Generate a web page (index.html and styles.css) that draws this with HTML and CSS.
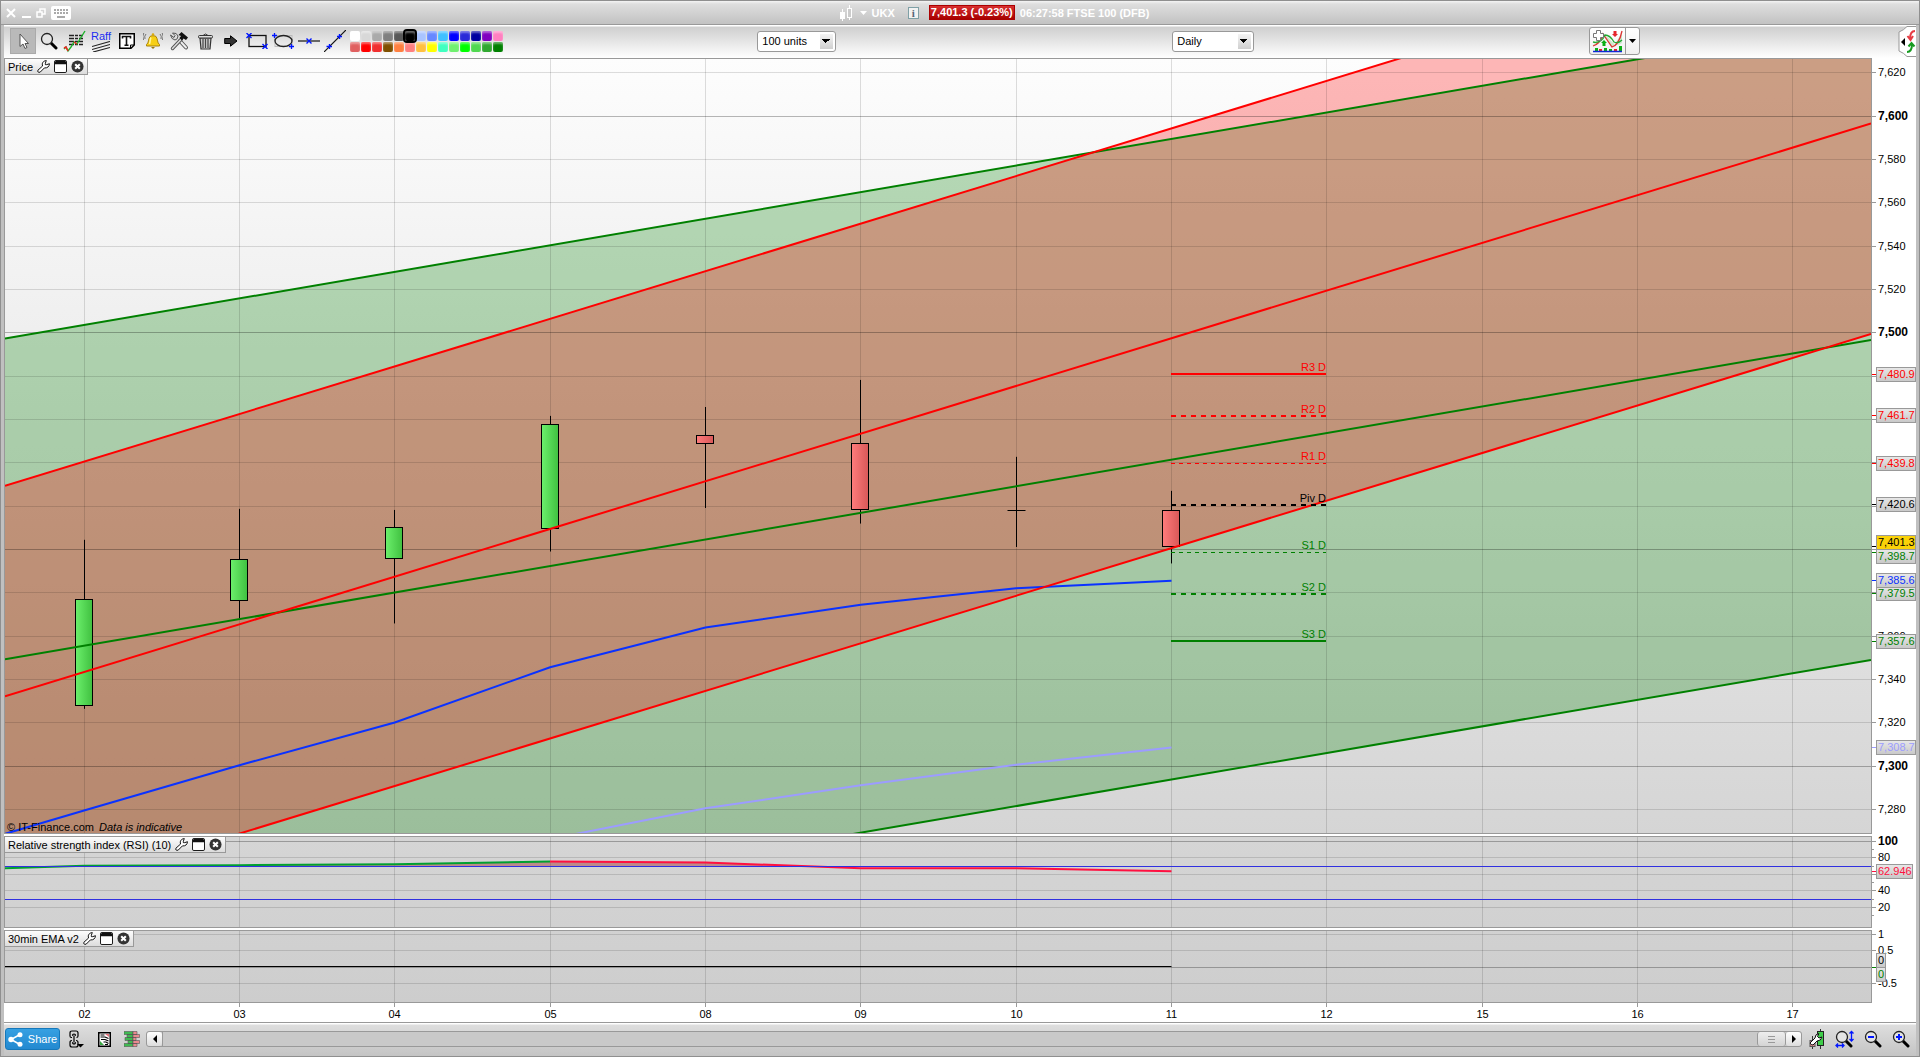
FILE: index.html
```html
<!DOCTYPE html>
<html lang="en">
<head>
    <meta charset="UTF-8">
    <meta name="viewport" content="width=device-width, initial-scale=1.0">
    <title>UKX - FTSE 100 (DFB)</title>
    <link rel="stylesheet" href="styles.css">
</head>
<body>
    <!-- shared icons -->
    <svg class="defs" width="0" height="0" aria-hidden="true">
        <symbol id="i-wrench" viewBox="0 0 14 14">
            <path d="M1 11 6 6.500C5 3.500 6.500 1 10 .600L9 3.500V5H10.500L13.400 4C13.400 7 11 9 8 8.500L3.500 13C1.500 14 .200 12.500 1 11Z" fill="#fff" stroke="#000" stroke-linejoin="round"/>
        </symbol>
        <symbol id="i-window" viewBox="0 0 14 14">
            <rect x="0.500" y="0.500" width="13" height="13" rx="1.500" fill="#fff" stroke="#000"/>
            <path d="M1 4.500V2L2 1H12L13 2V4.500Z" fill="#111"/>
        </symbol>
        <symbol id="i-close" viewBox="0 0 14 14">
            <circle cx="7" cy="7" r="6.500" fill="#333"/>
            <path d="M4.500 4.500 9.500 9.500M9.500 4.500 4.500 9.500" stroke="#fff" stroke-width="2.200"/>
        </symbol>
        <symbol id="i-lens" viewBox="0 0 18 18">
            <path d="M11 11 16 16" stroke="#000" stroke-width="3" stroke-linecap="round"/>
            <circle cx="7" cy="7" r="5.500" fill="#e4e4e4" stroke="#222" stroke-width="1.300"/>
        </symbol>
    </svg>

    <div class="window">
        <header class="titlebar">
            <div class="window-buttons">
                <button aria-label="Close"><svg width="10" height="10"><path d="M1 1 9 9M9 1 1 9" stroke="#fff" stroke-width="2"/></svg></button>
                <button aria-label="Minimize"><svg width="10" height="10"><path d="M1 9H10" stroke="#fff" stroke-width="2"/></svg></button>
                <button aria-label="Restore"><svg width="10" height="10"><path d="M4 4V1H9V6H6M1 4H6V9H1Z" fill="none" stroke="#fff" stroke-width="1.500"/></svg></button>
                <button aria-label="Keyboard"><svg width="20" height="14"><rect width="20" height="14" rx="2" fill="#fff"/><path d="M3 4H17M3 7H17" stroke="#aaa" stroke-width="2" stroke-dasharray="2 1"/><path d="M6 11H14" stroke="#aaa" stroke-width="2"/></svg></button>
            </div>
            <div class="instrument">
                <svg width="16" height="16"><path d="M3.500 4V16M10.500 0V15" stroke="#fff"/><rect x="1" y="7" width="5" height="7" fill="#fff"/><rect x="8.500" y="3.500" width="4" height="9" fill="#ccc" stroke="#fff"/></svg>
                <svg class="caret" width="7" height="4"><path d="M0 0H7L3.500 4Z" fill="#fff"/></svg>
                <b class="symbol">UKX</b>
                <button class="info" aria-label="Information">i</button>
                <b class="quote">7,401.3 (-0.23%)</b>
                <b>06:27:58 FTSE 100 (DFB)</b>
            </div>
        </header>

        <div class="toolbar">
            <div class="tools">
                <button class="tool active" aria-label="Pointer"><svg width="24" height="24"><path d="M9 5V17.500L12 15 14 19.500 16 18.500 14 14.500H17.500Z" fill="#fff" stroke="#555"/></svg></button>
                <button class="tool" aria-label="Zoom"><svg width="18" height="18"><use href="#i-lens"/></svg></button>
                <button class="tool" aria-label="Indicators"><svg width="24" height="24"><path d="M6 6.500H20M6 9.500H20M6 12.500H20M6 15.500H20" stroke="#222" stroke-width="1.500" stroke-dasharray="5 1 3 1"/><path d="M1 20 3 18 5 22 8 18 11 13 14 15 17 10 22 2" fill="none" stroke="#1db32b" stroke-width="1.400"/><path d="M1 19 3 18 5 22M11 13 14 15" fill="none" stroke="#e22" stroke-width="1.500"/></svg></button>
                <button class="tool raff" aria-label="Raff regression"><span>Raff</span><svg width="18" height="11"><path d="M0 5.500 18 0.500M0 8.500 18 3.500M1 11 18 6.500" stroke="#222" stroke-width="1.200"/></svg></button>
                <button class="tool" aria-label="Text"><svg width="16" height="16"><path d="M.750.750H15.250V12L12 15.250H.750Z" fill="#fff" stroke="#000" stroke-width="1.500"/><path d="M11.500 15V12H15" fill="none" stroke="#000"/><path d="M3.500 5.500V3.500H11.500V5.500M7.500 3.500V12M5.500 12.200H9.500" fill="none" stroke="#111" stroke-width="1.600"/></svg></button>
                <button class="tool" aria-label="Alert"><svg width="20" height="18"><path d="M3.500 12.500C6 11 5 7 7 4.500 8 3.500 12 3.500 13 4.500 15 7 14 11 16.500 12.500V14H3.500Z" fill="#f7cf16" stroke="#a9820b"/><path d="M8 5.500C7 7 7.500 9 6.500 12" stroke="#fff6a0" stroke-width="1.500" fill="none"/><circle cx="10" cy="2.500" r="1.300" fill="#d9a90e"/><path d="M8 15H12L10 17Z" fill="#9a760b"/><path d="M3 2Q1 4 2 7M.800 1Q-1 4 .500 8M17 2Q19 4 18 7M19.200 1Q21 4 19.500 8" stroke="#555" fill="none" stroke-width=".800"/></svg></button>
                <button class="tool" aria-label="Settings"><svg width="20" height="19"><path d="M11 9 17 15.500" stroke="#555" stroke-width="4" stroke-linecap="round"/><path d="M11 9 17 15.500" stroke="#eee" stroke-width="2" stroke-linecap="round"/><path d="M3.500 16.500 12 7.500" stroke="#555" stroke-width="3.400" stroke-linecap="round"/><path d="M3.500 16.500 12 7.500" stroke="#ddd" stroke-width="1.500" stroke-linecap="round"/><path d="M1.500 3 5 5.500 6 3.500 3.500 1Q8 .500 9 4 9 7.500 6 8 2.500 7.500 1.500 3Z" fill="#ddd" stroke="#555"/><path d="M9.500 3 12.500 0 19 5.500 17 8 14.500 6.500 13 8.500 10.500 6 12 4Z" fill="#111"/></svg></button>
                <button class="tool" aria-label="Delete"><svg width="15" height="17"><path d="M2 5 3 16H12L13 5Z" fill="#ccc" stroke="#333" stroke-width="1.200"/><path d="M5 6V15M7.500 6V15M10 6V15" stroke="#444" stroke-width="1.200"/><rect x=".500" y="2.500" width="14" height="2.500" rx="1" fill="#ddd" stroke="#333"/><path d="M5 2.500Q7.500-.500 10 2.500" fill="none" stroke="#333"/></svg></button>
                <button class="tool" aria-label="Arrow"><svg width="14" height="12"><path d="M.700 3.500H6.500V.800L13 6 6.500 11.200V8.500H.700Z" fill="#333" stroke="#000"/></svg></button>
                <button class="tool" aria-label="Rectangle"><svg width="22" height="16"><rect x="3" y="2.500" width="17" height="11" fill="none" stroke="#111" stroke-width="1.300"/><path d="M.500 0 5.500 5M5.500 0 .500 5M16.500 11 21.500 16M21.500 11 16.500 16" stroke="#0016ff" stroke-width="1.400"/></svg></button>
                <button class="tool" aria-label="Ellipse"><svg width="22" height="16"><rect x="3" y="2.500" width="17" height="11" fill="none" stroke="#bbb"/><ellipse cx="11.500" cy="8" rx="8.500" ry="5.500" fill="none" stroke="#222" stroke-width="1.300"/><path d="M0 2.500H5M2.500 0V5M17 13.500H22M19.500 11V16" stroke="#0016ff" stroke-width="1.300"/></svg></button>
                <button class="tool" aria-label="Horizontal line"><svg width="22" height="8"><path d="M0 4H22" stroke="#111" stroke-width="1.200"/><path d="M8.500 1.500 13.500 6.500M13.500 1.500 8.500 6.500" stroke="#0016ff" stroke-width="1.400"/></svg></button>
                <button class="tool" aria-label="Line"><svg width="22" height="22"><path d="M0 22 22 0" stroke="#111" stroke-width="1.200"/><path d="M2.500 16.500H8M5.500 14V19M13 6.500H18M15.500 4V9" stroke="#0016ff" stroke-width="1.400"/></svg></button>
                <div class="palette" id="palette"></div>
            </div>
            <div class="slot"><select class="units" aria-label="Units"><option>100 units</option></select></div>
            <div class="slot"><select class="period" aria-label="Period"><option>Daily</option></select></div>
            <div class="slot last">
                <div class="split">
                    <button aria-label="Add indicator"><svg width="31" height="23"><path d="M1 15 11 4 20 18 30 3V13Q24 19 17 8L12 5Q7 16 1 15Z" fill="#cde8cd"/><path d="M1 16Q8 14 11 4L20 17Q27 15 30 1" fill="none" stroke="#d33" stroke-width="1.300"/><path d="M1 12Q9 14 13 5 18 5 22 12 26 14 30 10" fill="none" stroke="#2a3" stroke-width="1.300"/><path d="M4.500.500H8.500V3.500H11.500V7.500H8.500V10.500H4.500V7.500H1.500V3.500H4.500Z" fill="#fff" stroke="#777"/><path d="M12 10 15 13H13.500V16H10.500V13H9ZM3 18H6V21H3ZM12 18H15V21H12ZM17 19H20V21H17ZM27 16H30V21H27Z" fill="#0aaf14"/><path d="M23 7 26 4H24.500V1H21.500V4H20ZM7 19H10V21H7ZM22 19H25V21H22Z" fill="#e5242c"/><path d="M1 21.500H30" stroke="#1028d8" stroke-width="1.500"/></svg></button>
                    <button class="drop" aria-label="Indicator menu"><svg width="7" height="4"><path d="M0 0H7L3.500 4Z"/></svg></button>
                </div>
                <button class="side-tab" aria-label="Open trading panel"><svg width="18" height="31"><path d="M18 .500H9Q6 4 1 6V25Q6 27 9 30.500H18" fill="#fff" stroke="#999"/><path d="M3 16 7 12V20Z"/><path d="M17 5Q12 5 12 13M9.500 10 12.500 14 15 10" fill="none" stroke="#e63c44" stroke-width="2"/><path d="M9 26Q14 26 14 18M10.500 20.500 13.500 17 16.500 20.500" fill="none" stroke="#169a20" stroke-width="2"/></svg></button>
            </div>
        </div>

        <main class="charts">
            <section class="panel price">
                <svg class="plot" id="price" role="img" aria-label="Price chart"></svg>
                <div class="panel-head">
                    <span>Price</span>
                    <button aria-label="Price settings"><svg><use href="#i-wrench"/></svg></button>
                    <button aria-label="Detach price"><svg><use href="#i-window"/></svg></button>
                    <button aria-label="Close price"><svg><use href="#i-close"/></svg></button>
                </div>
                <p class="credit">© IT-Finance.com <i>Data is indicative</i></p>
            </section>
            <section class="panel rsi">
                <svg class="plot" id="rsi" role="img" aria-label="RSI chart"></svg>
                <div class="panel-head">
                    <span>Relative strength index (RSI) (10)</span>
                    <button aria-label="RSI settings"><svg><use href="#i-wrench"/></svg></button>
                    <button aria-label="Detach RSI"><svg><use href="#i-window"/></svg></button>
                    <button aria-label="Close RSI"><svg><use href="#i-close"/></svg></button>
                </div>
            </section>
            <section class="panel ema">
                <svg class="plot" id="ema" role="img" aria-label="EMA chart"></svg>
                <div class="panel-head">
                    <span>30min EMA v2</span>
                    <button aria-label="EMA settings"><svg><use href="#i-wrench"/></svg></button>
                    <button aria-label="Detach EMA"><svg><use href="#i-window"/></svg></button>
                    <button aria-label="Close EMA"><svg><use href="#i-close"/></svg></button>
                </div>
            </section>
            <div class="dates"><svg class="plot" id="dates"></svg></div>
        </main>

        <footer class="footer">
            <button class="share"><svg width="15" height="15"><path d="M12 2.500 3 7.500 12 12.500" fill="none" stroke="#fff" stroke-width="1.500"/><circle cx="12" cy="2.700" r="2.500" fill="#fff"/><circle cx="3" cy="7.500" r="2.700" fill="#fff"/><circle cx="12" cy="12.300" r="2.500" fill="#fff"/></svg>Share</button>
            <button class="icon" aria-label="Link"><svg width="15" height="18"><path d="M3 7.500H2.500Q1 7.500 1 6V3Q1 1 3 1H7Q9 1 9 3V6Q9 7.500 7.500 7.500M3.800 6V4.500Q5 3.500 6.200 4.500V6M5 6V12M3 10.500Q1 10.500 1 12.500V15Q1 17 3 17H7Q9 17 9 15V12.500Q9 10.500 7 10.500M3.800 12V13.500Q5 14.500 6.200 13.500V12" fill="none" stroke="#000" stroke-width="1.200"/><path d="M8 14H15L11.500 17.500Z"/></svg></button>
            <button class="icon" aria-label="Order list"><svg width="13" height="15"><rect x=".750" y=".750" width="11.500" height="13.500" fill="#fff" stroke="#000" stroke-width="1.500"/><path d="M7 2H11V5Z" fill="#e5707a"/><path d="M2 9 6 13H2Z" fill="#3aa945"/><path d="M2.500 3H6.500M2.500 5H7L10.500 6.500M3 7.500H7L10.500 9M5.500 10H8L10.500 11.500M7 12.500H10" fill="none" stroke="#000" stroke-width="1.200"/></svg></button>
            <button class="icon" aria-label="Order book"><svg width="16" height="16"><path d="M0 .500H9V3.500H0ZM3 3.500H9V6.500H3ZM1 6.500H9V9.500H1ZM4 9.500H9V12.500H4ZM0 12.500H9V15.500H0Z" fill="#3fb951" stroke="#555" stroke-width=".600"/><path d="M9 .500H13V3.500H9ZM9 3.500H15.500V6.500H9ZM9 6.500H12V9.500H9ZM9 9.500H15.500V12.500H9ZM9 12.500H13V15.500H9Z" fill="#e98a8f" stroke="#555" stroke-width=".600"/></svg></button>
            <div class="scrollbar">
                <button aria-label="Scroll left"><svg width="4" height="8"><path d="M4 0V8L0 4Z"/></svg></button>
                <div class="track"><div class="thumb"><svg width="7" height="7"><path d="M0 .500H7M0 3.500H7M0 6.500H7" stroke="#999"/></svg></div></div>
                <button aria-label="Scroll right"><svg width="4" height="8"><path d="M0 0V8L4 4Z"/></svg></button>
            </div>
            <button class="icon" aria-label="Chart settings"><svg width="16" height="20"><path d="M11.500 0V20M3.500 7V20" stroke="#333"/><rect x="8.500" y="2.500" width="6" height="14" fill="#3fce4a" stroke="#222"/><rect x="1" y="11.500" width="5" height="6" fill="#e88b90" stroke="#555"/><path d="M1 14 6 9Q6 5 10 4.500L8.500 7.500 10 9 13 8Q12 12 8 12L4 16Q2 16 1 14Z" fill="#fff" stroke="#111"/></svg></button>
            <button class="icon" aria-label="Fit chart"><svg width="20" height="18"><use href="#i-lens" width="18" height="18"/><path d="M16.500 2V10M14.500 3.500 16.500 1.500 18.500 3.500M14.500 9 16.500 11 18.500 9M2 15.500H8M3 13.500 1 15.500 3 17.500M7 13.500 9 15.500 7 17.500" fill="none" stroke="#0016ff" stroke-width="1.300"/></svg></button>
            <button class="icon" aria-label="Zoom out"><svg width="18" height="18"><use href="#i-lens"/><path d="M4 7H10" stroke="#0016ff" stroke-width="2"/></svg></button>
            <button class="icon" aria-label="Zoom in"><svg width="18" height="18"><use href="#i-lens"/><path d="M4 7H10M7 4V10" stroke="#0016ff" stroke-width="2"/></svg></button>
        </footer>
    </div>
    <script src="script.js"></script>
</body>
</html>
```
FILE: styles.css
```css
* {
    box-sizing: border-box;
}
body {
    margin: 0;
    background: #c8c8c8;
    color: #000;
    font-family: "Liberation Sans", Arial, sans-serif;
    font-size: 11px;
}
button {
    margin: 0;
    padding: 0;
    border: 0;
    background: none;
    color: inherit;
    font: inherit;
    display: flex;
    align-items: center;
    justify-content: center;
}
svg {
    display: block;
    flex: none;
}
.defs {
    position: absolute;
}
.window {
    height: 100vh;
    min-height: 480px;
    display: flex;
    flex-direction: column;
    border: 1px solid #8f8f8f;
    background: #c0c0c0;
}

/* title bar */
.titlebar {
    height: 24px;
    flex: none;
    display: flex;
    align-items: center;
    padding-left: 5px;
    border-bottom: 1px solid #999;
    background: linear-gradient(#f4f4f4, #dedede 3px, #c2c2c2);
    color: #fff;
}
.window-buttons {
    display: flex;
    align-items: center;
    gap: 5px;
}
.instrument {
    flex: 1;
    display: flex;
    align-items: center;
    justify-content: center;
    gap: 5px;
    padding-right: 2px;
}
.symbol {
    margin-right: 8px;
}
.info {
    width: 11px;
    height: 12px;
    margin-right: 5px;
    border: 1px solid #7fa0a6;
    background: #f2f2f2;
    color: #567;
    font-family: "Liberation Serif", serif;
    font-weight: bold;
}
.quote {
    height: 15px;
    line-height: 13px;
    padding: 0 1px;
    border: 1px solid #a00;
    background: linear-gradient(#d83030, #a80000);
}

/* toolbar */
.toolbar {
    height: 33px;
    flex: none;
    margin: 0 3px;
    padding-bottom: 1px;
    display: grid;
    grid-template-columns: 39.4% 21.7% 21.8% 1fr;
    align-items: center;
    background: linear-gradient(#fff 1px, #cfcfcf 2px, #fff);
}
.tools {
    display: flex;
    align-items: center;
    padding-left: 6px;
}
.tool {
    width: 26px;
    height: 26px;
}
.tool.active {
    background: #b9b9b9;
    border: 1px solid #aaa;
}
.raff {
    flex-direction: column;
    color: #1a2cf0;
    line-height: 10px;
}
.palette {
    display: grid;
    grid-template-columns: repeat(14, 10px);
    gap: 1px;
    margin-left: 2px;
}
.swatch {
    width: 10px;
    height: 10px;
    border-radius: 2px;
    box-shadow: inset 0 2px 2px rgba(255, 255, 255, .4);
}
.swatch.selected {
    z-index: 1;
    outline: 2px solid #000;
}
.slot {
    display: flex;
    align-items: center;
}
.slot.last {
    justify-content: space-between;
}
select {
    height: 21px;
    padding: 0 4px;
    border: 1px solid #999;
    border-radius: 3px;
    appearance: none;
    color: #000;
    font: inherit;
    background:
        linear-gradient(to bottom right, #000 50%, transparent 50%) no-repeat right 5px center / 4px 4px,
        linear-gradient(to bottom left, #000 50%, transparent 50%) no-repeat right 9px center / 4px 4px,
        linear-gradient(#f4f4f4, #cfcfcf) no-repeat right 2px center / 13px 15px,
        #fff;
}
.units {
    width: 79px;
}
.period {
    width: 82px;
}
.split {
    display: flex;
    height: 28px;
    border: 1px solid #999;
    border-radius: 3px;
    background: linear-gradient(#fff, #f0f0f0);
}
.split button {
    padding: 0 2px;
}
.split .drop {
    width: 14px;
    border-left: 1px solid #999;
}

/* chart panels */
.charts {
    flex: 1;
    min-height: 0;
    margin: 0 3px;
    display: flex;
    flex-direction: column;
    background: #fff;
}
.panel {
    position: relative;
    overflow: hidden;
    flex: none;
    margin-bottom: 2px;
}
.price {
    flex: 1;
    min-height: 0;
}
.rsi {
    height: 92px;
}
.ema {
    height: 73px;
    margin-bottom: 0;
}
.dates {
    height: 19px;
    flex: none;
}
.plot {
    width: 100%;
    height: 100%;
}
.panel-head {
    position: absolute;
    left: 1px;
    top: 1px;
    height: 16px;
    display: flex;
    align-items: center;
    gap: 4px;
    padding: 0 3px;
    border: solid #999;
    border-width: 0 1px 1px 0;
    background: linear-gradient(#fdfdfd, #dcdcdc);
}
.panel-head svg {
    width: 13px;
    height: 13px;
}
.credit {
    position: absolute;
    left: 3px;
    bottom: 1px;
    margin: 0;
    line-height: 12px;
}
.credit i {
    margin-left: 2px;
}

/* plot parts */
.bold {
    font-size: 12px;
    font-weight: bold;
}
.grid {
    stroke: #000;
    stroke-opacity: .13;
}
.grid.major {
    stroke-opacity: .28;
}
.tick {
    stroke: #999;
}
.frame {
    fill: none;
    stroke: #999;
}
.line {
    fill: none;
    stroke-width: 2;
}
.tag {
    fill: url(#tag-gray);
    stroke: #999;
}
.tag.last {
    fill: #fbd208;
}

/* footer */
.footer {
    height: 34px;
    flex: none;
    display: flex;
    align-items: center;
    margin: 0 3px;
    padding: 0 1px 1px;
    border-top: 1px solid #999;
    background: linear-gradient(#fff 1px, #dedede 2px, #c4c4c4);
}
.share {
    width: 55px;
    height: 22px;
    gap: 5px;
    margin-right: 2px;
    border: 1px solid #1678ba;
    border-radius: 3px;
    background: linear-gradient(#36a0e2, #2389d0);
    color: #fff;
}
.icon {
    width: 28px;
    height: 24px;
}
.scrollbar {
    flex: 1;
    height: 16px;
    display: flex;
    margin-right: 1px;
    border: 1px solid #999;
    border-radius: 3px;
    background: #c9c9c9;
}
.scrollbar button {
    width: 15px;
    border-radius: 3px;
    background: linear-gradient(#fff, #ddd);
}
.track {
    flex: 1;
    display: flex;
    justify-content: flex-end;
    border-left: 1px solid #999;
}
.thumb {
    width: 29px;
    display: flex;
    align-items: center;
    justify-content: center;
    border: solid #999;
    border-width: 0 1px;
    border-radius: 3px;
    background: linear-gradient(#eee, #d4d4d4);
}
```
FILE: script.js
```js
const AXIS_WIDTH = 45;
const T_MIN = -0.509;
const T_MAX = 11.503;

const days = ["02", "03", "04", "05", "08", "09", "10", "11", "12", "15", "16", "17"];

// open, high, low, close
const candles = [
    [7327.9, 7404.5, 7326.5, 7376.8],
    [7376.3, 7418.8, 7368.4, 7395.4],
    [7396.1, 7418.3, 7365.9, 7410.2],
    [7409.8, 7461.7, 7399.1, 7457.8],
    [7452.7, 7465.8, 7419.2, 7449],
    [7449, 7478.3, 7412, 7418.5],
    [7418.1, 7442.8, 7401.2, 7418.1],
    [7418.1, 7427.1, 7393.6, 7401.5]
];

// upper, middle and lower line: price at the left and at the right edge
const channels = [
    { color: "#008000", fill: "rgba(0,128,0,.27)", lines: [[7497.4, 7644.7], [7349.4, 7496.7], [7201.8, 7349.1]] },
    { color: "#ff0000", fill: "rgba(255,0,0,.28)", lines: [[7429.4, 7693.3], [7332.3, 7596.6], [7235.8, 7499.5]] }
];

const emaFast = [[-0.509, 7268.8], [0, 7279.6], [1, 7300.5], [2, 7320.2], [3, 7345.7], [4, 7364], [5, 7374.5], [6, 7382.1], [7, 7385.6]];
const emaSlow = [[3, 7266.4], [4, 7280.6], [5, 7291.2], [6, 7300.7], [7, 7308.7]];

const pivots = [
    ["R3 D", 7480.9, "#ff0000", 2, ""],
    ["R2 D", 7461.7, "#ff0000", 2, "5 5"],
    ["R1 D", 7439.8, "#ff0000", 1, "4 4"],
    ["Piv D", 7420.6, "#000", 2, "5 5"],
    ["S1 D", 7398.7, "#008000", 1, "4 4"],
    ["S2 D", 7379.5, "#008000", 2, "5 5"],
    ["S3 D", 7357.6, "#008000", 2, ""]
];

const rsiData = [[-0.509, 67.4], [0, 70.2], [1, 71], [2, 72.2], [3, 75.4], [4, 74.3], [5, 67.3], [6, 67.3], [7, 63.6]];

const colors = [
    "#ffffff", "#d8d8d8", "#aaaaaa", "#808080", "#585858", "#000000", "#a9c4ff", "#6688ff", "#40c0ff", "#0000ff", "#2a2ad8", "#0000a0", "#8000c0", "#ff80c0",
    "#e06060", "#ff0000", "#f03030", "#805000", "#ff8040", "#ff8080", "#ffc040", "#ffff00", "#40ffc0", "#70f070", "#00ff00", "#50d850", "#30a830", "#008000"
];

function snap(v) {
    return Math.floor(v) + 0.5;
}

function line(x1, y1, x2, y2, attrs) {
    return `<line x1="${x1}" y1="${y1}" x2="${x2}" y2="${y2}" ${attrs}/>`;
}

function text(x, y, str, attrs = "") {
    return `<text x="${x}" y="${y}" ${attrs}>${str}</text>`;
}

function setup(id, max, min) {
    const svg = document.getElementById(id);
    const box = svg.getBoundingClientRect();
    const w = box.width;
    const h = box.height;
    const right = w - AXIS_WIDTH;
    return {
        svg, id, w, h, right,
        x: t => 1 + (t - T_MIN) / (T_MAX - T_MIN) * (right - 1),
        y: v => 1 + (max - v) / (max - min) * (h - 2)
    };
}

// background, from and to are the grey levels at the top and bottom
function background(c, from, to) {
    return `<defs>
        <linearGradient id="${c.id}-bg" x2="0" y2="1"><stop stop-color="${from}"/><stop offset="1" stop-color="${to}"/></linearGradient>
        <linearGradient id="tag-gray" x2="0" y2="1"><stop stop-color="#e8e8e8"/><stop offset="1" stop-color="#c8c8c8"/></linearGradient>
        <linearGradient id="up"><stop stop-color="#6cf06c"/><stop offset="1" stop-color="#40c040"/></linearGradient>
        <linearGradient id="down"><stop stop-color="#ff7c7c"/><stop offset="1" stop-color="#d85858"/></linearGradient>
        <clipPath id="${c.id}-clip"><rect x="1" y="1" width="${c.right - 1}" height="${c.h - 2}"/></clipPath>
    </defs>
    <rect width="${c.right}" height="${c.h}" fill="url(#${c.id}-bg)"/>`;
}

function grid(c, values, isMajor) {
    let out = "";
    days.forEach((d, i) => {
        out += line(snap(c.x(i)), 1, snap(c.x(i)), c.h - 1, 'class="grid"');
    });
    values.forEach(v => {
        const y = snap(c.y(v));
        out += line(1, y, c.right, y, `class="grid ${isMajor(v) ? "major" : ""}"`);
    });
    return out;
}

// values in hidden get a tick but no label, a tag stands there
function axis(c, values, isMajor, format, hidden = []) {
    let out = `<rect class="frame" x=".5" y=".5" width="${c.right}" height="${c.h - 1}"/>`;
    values.forEach(v => {
        const y = snap(c.y(v));
        out += line(c.right, y, c.right + 5, y, 'class="tick"');
        if (!hidden.includes(v)) {
            out += text(c.right + 7, y + 3.5, format(v), isMajor(v) ? 'class="bold"' : "");
        }
    });
    return out;
}

function tag(c, value, label, color, width, shift = 0, cls = "") {
    const y = snap(c.y(value));
    return line(c.right + 1, y, c.right + 5, y, `stroke="${color}"`) +
        `<rect class="tag ${cls}" x="${c.right + 5}.5" y="${y - 7 + shift}" width="${width}" height="14"/>` +
        text(c.right + 7, y + 3.5 + shift, label, `fill="${color}"`);
}

function path(c, points, color) {
    const d = points.map(p => `${c.x(p[0])},${c.y(p[1])}`).join(" ");
    return `<polyline class="line" points="${d}" stroke="${color}"/>`;
}

function range(from, to, step) {
    const out = [];
    for (let v = from; v <= to; v += step) out.push(v);
    return out;
}

function drawPrice() {
    const c = setup("price", 7626.4, 7269.2);
    const values = range(7280, 7620, 20);
    const major = v => v % 100 === 0;
    const format = v => v.toLocaleString("en-US", { minimumFractionDigits: v % 1 ? 1 : 0 });
    let out = background(c, "#fdfdfd", "#d5d5d5");

    out += `<g clip-path="url(#price-clip)">`;
    channels.forEach(ch => {
        const [top, , low] = ch.lines;
        out += `<path fill="${ch.fill}" d="M0 ${c.y(top[0])}L${c.right} ${c.y(top[1])}V${c.y(low[1])}L0 ${c.y(low[0])}Z"/>`;
    });
    out += grid(c, values, major);

    candles.forEach(([open, high, low, close], i) => {
        const x = snap(c.x(i));
        const top = snap(c.y(Math.max(open, close)));
        const bottom = snap(c.y(Math.min(open, close)));
        out += line(x, c.y(high), x, c.y(low), 'stroke="#000"');
        if (top === bottom) {
            out += line(x - 9, top, x + 9, top, 'stroke="#000"');
        } else {
            out += `<rect x="${x - 9}" y="${top}" width="17" height="${bottom - top}" fill="url(#${close > open ? "up" : "down"})" stroke="#000"/>`;
        }
    });

    out += path(c, emaSlow, "#9c9cff") + path(c, emaFast, "#0a32ff");
    channels.forEach(ch => {
        ch.lines.forEach(l => out += path(c, [[T_MIN, l[0]], [T_MAX, l[1]]], ch.color));
    });
    pivots.forEach(([name, value, color, width, dash]) => {
        const y = width === 2 ? Math.round(c.y(value)) : snap(c.y(value));
        out += line(Math.floor(c.x(7)), y, Math.floor(c.x(8)), y, `stroke="${color}" stroke-width="${width}" stroke-dasharray="${dash}"`);
        out += text(Math.floor(c.x(8)), Math.floor(y) - 3, name, `fill="${color}" text-anchor="end"`);
    });
    out += "</g>";

    out += axis(c, values, major, format, [7480, 7460, 7440, 7420, 7400, 7380]);
    pivots.forEach(([name, value, color]) => {
        out += tag(c, value, format(value), color, 39, name === "S1 D" ? 4 : 0);
    });
    out += tag(c, 7385.6, "7,385.6", "#0a32ff", 39);
    out += tag(c, 7308.7, "7,308.7", "#9c9cff", 39);
    out += tag(c, 7401.3, "7,401.3", "#000", 39, -4, "last");
    c.svg.innerHTML = out;
}

function drawRsi() {
    const c = setup("rsi", 105.2, -3.9);
    const values = [100, 80, 60, 40, 20];
    const major = v => v === 100;
    let out = background(c, "#d5d5d5", "#d1d1d1") + grid(c, values, major);

    // area above the overbought level
    const over = rsiData.filter(p => p[1] > 70).map(p => `${c.x(p[0])},${c.y(p[1])}`).join(" ");
    out += `<polygon points="${c.x(0)},${c.y(70)} ${over} ${c.x(4.6)},${c.y(70)}" fill="#a03030" fill-opacity=".45"/>`;
    out += path(c, rsiData.slice(0, 5), "#00a030") + path(c, rsiData.slice(4), "#ff1040");
    [70, 30].forEach(v => {
        out += line(1, snap(c.y(v)), c.right, snap(c.y(v)), 'stroke="#3030e0"');
    });

    out += axis(c, values, major, String, [60]);
    [90, 70, 50, 30, 10].forEach(v => {
        out += line(c.right + 1, snap(c.y(v)), c.right + 3, snap(c.y(v)), 'class="tick"');
    });
    out += tag(c, 63.6, "62.946", "#ff1040", 36);
    c.svg.innerHTML = out;
}

function drawEma() {
    const c = setup("ema", 1.1, -1.05);
    const values = [1, 0.5, 0, -0.5];
    const major = v => v === 0;
    let out = background(c, "#d1d1d1", "#cdcdcd") + grid(c, values, major);
    const y = snap(c.y(0));
    out += line(1, y - 1, c.x(7), y - 1, 'stroke="#000"');
    out += axis(c, values, () => false, String, [0]);
    out += tag(c, 0, "0", "#000", 9, -7) + tag(c, 0, "0", "#008000", 9, 7);
    c.svg.innerHTML = out;
}

function drawDates() {
    const c = setup("dates", 1, 0);
    c.svg.innerHTML = days.map((d, i) => {
        const x = snap(c.x(i));
        return line(x, 0, x, 4, 'class="tick"') + text(x, 15, d, 'text-anchor="middle"');
    }).join("");
}

function draw() {
    drawPrice();
    drawRsi();
    drawEma();
    drawDates();
}

document.getElementById("palette").innerHTML = colors.map(color =>
    `<button class="swatch ${color === "#000000" ? "selected" : ""}" style="background-color: ${color}" aria-label="${color}"></button>`
).join("");

window.addEventListener("resize", draw);
draw();
```
